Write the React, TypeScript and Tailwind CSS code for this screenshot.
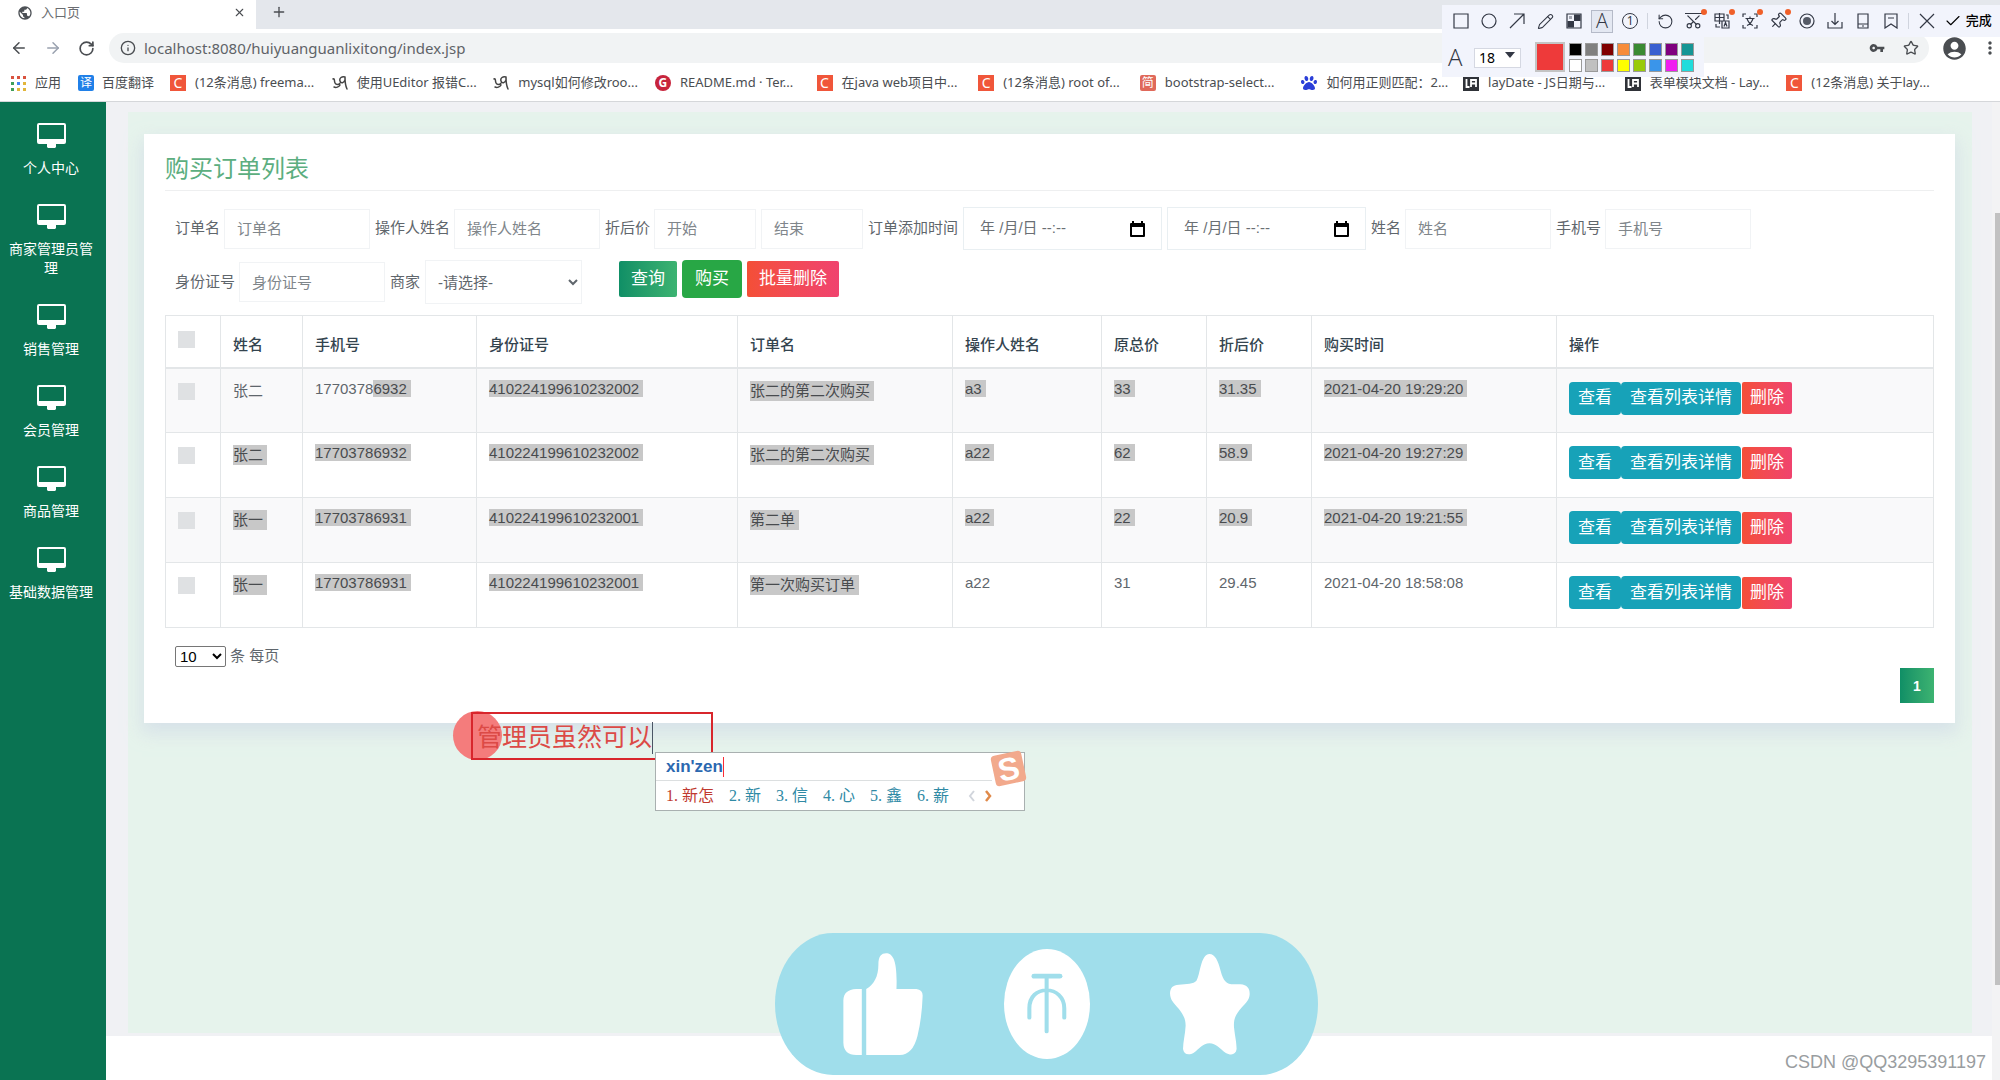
import { useState } from 'react';
import type { ReactNode } from 'react';
import { ArrowLeft, ArrowRight, Check, Info, Pencil, Pin, Plus, RotateCcw, RotateCw, Scissors, Star, X } from 'lucide-react';
import { MdAccountCircle, MdMoreVert, MdPublic, MdVpnKey } from 'react-icons/md';
import { FaPaw } from 'react-icons/fa';

type Bookmark = { icon: 'csdn' | 'script' | 'gitee' | 'jian' | 'baidu' | 'layui'; title: string };

const bookmarks: Bookmark[] = [
  { icon: 'csdn', title: '(12条消息) freema...' },
  { icon: 'script', title: '使用UEditor 报错C...' },
  { icon: 'script', title: 'mysql如何修改roo...' },
  { icon: 'gitee', title: 'README.md · Ter...' },
  { icon: 'csdn', title: '在java web项目中...' },
  { icon: 'csdn', title: '(12条消息) root of...' },
  { icon: 'jian', title: 'bootstrap-select...' },
  { icon: 'baidu', title: '如何用正则匹配：2...' },
  { icon: 'layui', title: 'layDate - JS日期与...' },
  { icon: 'layui', title: '表单模块文档 - Lay...' },
  { icon: 'csdn', title: '(12条消息) 关于lay...' },
];

const menu = ['个人中心', '商家管理员管理', '销售管理', '会员管理', '商品管理', '基础数据管理'];

type Order = {
  id: number;
  name: string;
  phone: string;
  idCard: string;
  order: string;
  operator: string;
  total: string;
  price: string;
  time: string;
};

const orders: Order[] = [
  { id: 1, name: '张二', phone: '17703786932', idCard: '410224199610232002', order: '张二的第二次购买', operator: 'a3', total: '33', price: '31.35', time: '2021-04-20 19:29:20' },
  { id: 2, name: '张二', phone: '17703786932', idCard: '410224199610232002', order: '张二的第二次购买', operator: 'a22', total: '62', price: '58.9', time: '2021-04-20 19:27:29' },
  { id: 3, name: '张一', phone: '17703786931', idCard: '410224199610232001', order: '第二单', operator: 'a22', total: '22', price: '20.9', time: '2021-04-20 19:21:55' },
  { id: 4, name: '张一', phone: '17703786931', idCard: '410224199610232001', order: '第一次购买订单', operator: 'a22', total: '31', price: '29.45', time: '2021-04-20 18:58:08' },
];

const headers = ['姓名', '手机号', '身份证号', '订单名', '操作人姓名', '原总价', '折后价', '购买时间', '操作'];

const swatches = [
  'bg-black', 'bg-[#808080]', 'bg-[#800000]', 'bg-[#f78c3a]', 'bg-[#3a8a32]', 'bg-[#3a5fd0]', 'bg-[#7f007f]', 'bg-[#159595]',
  'bg-white', 'bg-[#c0c0c0]', 'bg-[#ee3a3a]', 'bg-[#ffff00]', 'bg-[#9aca0a]', 'bg-[#3a95ea]', 'bg-[#f01df0]', 'bg-[#20dcdc]',
];

const BookmarkIcon = ({ icon }: { icon: Bookmark['icon'] }) => {
  if (icon === 'csdn') {
    return <span className="flex size-4 shrink-0 items-center justify-center bg-[#f0563a] text-sm text-white">C</span>;
  }
  if (icon === 'gitee') {
    return <span className="flex size-4 shrink-0 items-center justify-center rounded-full bg-[#c7243c] text-xs font-bold text-white">G</span>;
  }
  if (icon === 'jian') {
    return <span className="flex size-4 shrink-0 items-center justify-center rounded-xs bg-[#e0695a] text-xs text-white">简</span>;
  }
  if (icon === 'baidu') return <FaPaw className="size-4 shrink-0 text-[#2b3fd8]" />;
  if (icon === 'layui') {
    return (
      <svg viewBox="0 0 16 16" className="size-4 shrink-0">
        <rect width="16" height="16" fill="#2f3238" />
        <path d="M3.5 4v8h3M8 12V5h5v7M8 8.500h5" fill="none" stroke="#fff" strokeWidth="1.8" />
      </svg>
    );
  }
  return (
    <svg viewBox="0 0 16 16" className="size-4 shrink-0" fill="none" stroke="#444" strokeWidth="1.5" strokeLinecap="round">
      <path d="M1 4c2-1 1 2 2 4s4 2 5 0M13 2c-3-1-6 1-5 4s4 2 5-1V2c0 4 0 8 2 12M2 12c2 1 5 0 6-2" />
    </svg>
  );
};

const Browser = () => (
  <header className="bg-white text-[13px] text-[#4a4d51]">
    <div className="flex h-[29px] bg-[#e4e7ec]">
      <div className="flex w-64 items-center bg-white pb-1 pl-[17px] pr-2.5">
        <MdPublic size={16} className="text-[#4d5156]" />
        <span className="ml-2 flex-1 text-[#6a6d71]">入口页</span>
        <button aria-label="关闭标签页"><X size={13} /></button>
      </div>
      <div className="flex-1 rounded-bl-lg pl-[15px] pt-1">
        <button aria-label="新标签页"><Plus size={16} /></button>
      </div>
    </div>
    <div className="flex h-[38px] items-center pl-2.5">
      <button aria-label="后退"><ArrowLeft size={18} /></button>
      <button aria-label="前进" className="ml-4 text-gray-400"><ArrowRight size={18} /></button>
      <button aria-label="刷新" className="ml-4"><RotateCw size={17} strokeWidth={2.4} /></button>
      <div className="ml-3.5 flex h-[30px] flex-1 items-center rounded-full bg-[#f1f3f4] pl-[11px] pr-2.5">
        <Info size={16} />
        <input
          aria-label="地址"
          defaultValue="localhost:8080/huiyuanguanlixitong/index.jsp"
          className="ml-2 flex-1 bg-transparent text-[15px] text-[#5f6368] outline-none"
        />
        <MdVpnKey size={16} />
        <button aria-label="收藏" className="ml-[18px]"><Star size={16} /></button>
      </div>
      <MdAccountCircle size={27} className="ml-3" />
      <button aria-label="菜单" className="ml-3"><MdMoreVert size={20} /></button>
    </div>
    <nav className="flex h-[35px] items-center border-b border-[#d5d7da] pb-0.5 pl-2.5 pr-[52px]">
      <a href="#apps" className="flex w-[68px] items-center gap-[9px]">
        <svg viewBox="0 0 16 16" className="size-4">
          <path d="M1 1h3v3H1zM7 1h3v3H7zM13 1h3v3h-3z" fill="#d9533f" />
          <path d="M1 7h3v3H1zM1 13h3v3H1z" fill="#3f9f5a" />
          <path d="M7 7h3v3H7z" fill="#4285f4" />
          <path d="M13 7h3v3h-3zM7 13h3v3H7zM13 13h3v3h-3z" fill="#e2b53a" />
        </svg>
        应用
      </a>
      <a href="#fanyi" className="flex w-[92px] items-center gap-2">
        <span className="flex size-4 items-center justify-center rounded-xs bg-[#2080e8] text-xs text-white">译</span>
        百度翻译
      </a>
      <div className="grid flex-1 grid-cols-11">
        {bookmarks.map((b) => (
          <a key={b.title} href="#bookmark" className="flex items-center gap-[9px] whitespace-nowrap">
            <BookmarkIcon icon={b.icon} />
            {b.title}
          </a>
        ))}
      </div>
    </nav>
  </header>
);

const Tool = ({ label, dot, active, children }: { label: string; dot?: boolean; active?: boolean; children: ReactNode }) => (
  <button
    aria-label={label}
    className={`relative flex h-[23px] w-[22px] items-center justify-center ${active ? 'border border-[#b5bac8] bg-[#e4e8f2]' : ''}`}
  >
    {children}
    {dot && <span className="absolute -right-0.5 -top-px size-1.5 rounded-full bg-[#f0602a]" />}
  </button>
);

const Glyph = ({ d, children }: { d: string; children?: ReactNode }) => (
  <svg viewBox="0 0 16 16" className="size-4" fill="none" stroke="currentColor" strokeWidth="1.2">
    <path d={d} />
    {children}
  </svg>
);

// floating screenshot toolbar, sits above the browser bars
const CaptureToolbar = () => (
  <div className="absolute right-0 top-[5px] w-[558px] text-[#333845]">
    <div className="flex h-8 items-center justify-between bg-[#f2f4fc] px-2">
      <Tool label="矩形"><Glyph d="M1 1h14v14H1z" /></Tool>
      <Tool label="椭圆"><Glyph d="M8 1a7 7 0 1 1 0 14A7 7 0 0 1 8 1z" /></Tool>
      <Tool label="箭头"><Glyph d="M1 15L15 1M5 1h10v10" /></Tool>
      <Tool label="画笔"><Pencil size={17} strokeWidth={1.5} /></Tool>
      <Tool label="马赛克">
        <Glyph d="M1 1h14v14H1z">
          <path d="M8 1.500h6.500V8H8zM1.500 8H8v6.500H1.500z" fill="currentColor" stroke="none" />
          <path d="M3 3h3v3H3z" fill="currentColor" stroke="none" opacity=".4" />
        </Glyph>
      </Tool>
      <Tool label="文字" active><span className="font-['Open_Sans'] text-xl font-light">A</span></Tool>
      <Tool label="序号"><span className="flex size-4 items-center justify-center rounded-full border border-current text-xs">1</span></Tool>
      <span className="h-4 w-px bg-[#d0d4de]" />
      <Tool label="撤销"><RotateCcw size={17} strokeWidth={1.5} /></Tool>
      <Tool label="截图" dot>
        <span className="relative flex"><Scissors size={17} strokeWidth={1.6} className="-rotate-90" /><span className="absolute inset-x-0 top-0 h-px bg-current" /></span>
      </Tool>
      <Tool label="翻译" dot>
        <Glyph d="M1 1h9v7H1zM5.500 0v11M1 4.500h9M8 8h7v7H8zM10 13.500l1.500-4 1.500 4M2 11v3h4M12 2h2v4" />
      </Tool>
      <Tool label="识别文字" dot>
        <Glyph d="M1 4V1h3M12 1h3v3M15 12v3h-3M4 15H1v-3M3.500 5.500h9M8 3.500v2M5 12.500c3-1 5-4 6-7M5 5.500c1 3 3 6 6 7" />
      </Tool>
      <Tool label="钉住" dot><Pin size={18} strokeWidth={1.6} className="rotate-45" /></Tool>
      <Tool label="录制">
        <Glyph d="M8 1a7 7 0 1 1 0 14A7 7 0 0 1 8 1z"><circle cx="8" cy="8" r="4" fill="#555a66" stroke="none" /></Glyph>
      </Tool>
      <Tool label="保存"><Glyph d="M1 9v6h14V9M8 0v11M4.500 8L8 11.500 11.500 8" /></Tool>
      <Tool label="手机"><Glyph d="M3 1h10v14H3zM3 11h10M7 13h2" /></Tool>
      <Tool label="收藏"><Glyph d="M2 1h12v14l-6-4-6 4zM5 5h6" /></Tool>
      <span className="h-4 w-px bg-[#d0d4de]" />
      <Tool label="取消"><Glyph d="M1 1l14 14M15 1L1 15" /></Tool>
      <button className="flex items-center gap-1 text-[13px] font-medium text-black"><Check size={18} strokeWidth={1.5} />完成</button>
    </div>
    <div className="flex h-10 w-[262px] items-center bg-[#f2f4fc] pl-1.5">
      <span className="w-[26px] font-['Open_Sans'] text-2xl font-light">A</span>
      <div className="relative">
        <select aria-label="字号" className="h-5 w-[47px] appearance-none border border-[#d5d8e2] bg-white pl-1 text-sm/none text-black">
          <option>18</option>
        </select>
        <svg viewBox="0 0 10 6" className="pointer-events-none absolute right-1.5 top-[7px] h-1.5 w-2.5"><path d="M0 0h10L5 6z" fill="currentColor" /></svg>
      </div>
      <span className="ml-3.5 size-[30px] border-2 border-[#c4c4c4] bg-[#ee3a3a]" />
      <div className="ml-1 grid grid-cols-8 gap-[3px]">
        {swatches.map((color) => (
          <button key={color} aria-label="颜色" className={`size-[13px] border border-[#9a9a9a] ${color}`} />
        ))}
      </div>
    </div>
  </div>
);

const Sidebar = () => (
  <aside className="w-[106px] shrink-0 bg-[#0a7352] pr-1 pt-[21px] text-center text-sm/[19px] text-white">
    {menu.map((item) => (
      <a key={item} href="#menu" className="mb-[26px] flex flex-col items-center gap-[11px] px-2">
        <svg viewBox="0 0 29 25" className="h-[25px] w-[29px]" fill="currentColor">
          <path fillRule="evenodd" d="M2 0h25a2 2 0 0 1 2 2v17a2 2 0 0 1-2 2h-8v3l-1 1h-7l-1-1v-3H2a2 2 0 0 1-2-2V2a2 2 0 0 1 2-2zM2 2v14h25V2z" />
        </svg>
        {item}
      </a>
    ))}
  </aside>
);

const Field = ({ id, label, hint = label, narrow }: { id: string; label?: string; hint?: string; narrow?: boolean }) => (
  <div className="flex items-center gap-1">
    {label && <label htmlFor={id}>{label}</label>}
    <input
      id={id}
      aria-label={hint}
      placeholder={hint}
      className={`h-10 border border-[#f1f3f5] px-3 placeholder:text-[#80868b] ${narrow ? 'w-[102px]' : 'w-[146px]'}`}
    />
  </div>
);

const DateField = ({ id }: { id: string }) => (
  <div className="flex h-[43px] w-[199px] items-center border border-[#e9eff2] px-4">
    <input id={id} aria-label="订单添加时间" placeholder="年 /月/日 --:--" className="w-full min-w-0 placeholder:text-[#6a6f74]" />
    <svg viewBox="0 0 15 16" className="h-4 w-[15px] shrink-0 text-black">
      <path fillRule="evenodd" d="M2 0h2v2h7V0h2v2h1a1 1 0 0 1 1 1v12a1 1 0 0 1-1 1H1a1 1 0 0 1-1-1V3a1 1 0 0 1 1-1h1zM2 6v8h11V6z" fill="currentColor" />
    </svg>
  </div>
);

const Filters = () => (
  <form className="flex flex-col gap-2.5 pl-2.5 pt-4" onSubmit={(e) => e.preventDefault()}>
    <div className="flex items-center gap-[5px] whitespace-nowrap">
      <Field id="order" label="订单名" />
      <Field id="operator" label="操作人姓名" />
      <Field id="from" label="折后价" hint="开始" narrow />
      <Field id="to" hint="结束" narrow />
      <label htmlFor="dateFrom">订单添加时间</label>
      <DateField id="dateFrom" />
      <DateField id="dateTo" />
      <Field id="name" label="姓名" />
      <Field id="phone" label="手机号" />
    </div>
    <div className="flex items-center gap-[5px] whitespace-nowrap">
      <Field id="idCard" label="身份证号" />
      <label htmlFor="shop">商家</label>
      <select id="shop" className="h-11 w-[157px] border border-[#f1f3f5] px-2">
        <option>-请选择-</option>
      </select>
      <div className="ml-8 flex items-center gap-[5px] self-start text-[17px] text-white">
        <button className="h-9 rounded-xs bg-linear-to-r from-[#0f8f66] to-[#3cb371] px-3">查询</button>
        <button className="h-[38px] rounded-sm bg-[#28a745] px-[13px]">购买</button>
        <button className="h-9 rounded-xs bg-linear-to-r from-[#f44f36] to-[#f0436e] px-3">批量删除</button>
      </div>
    </div>
  </form>
);

const OrderTable = () => {
  const cell = 'border border-[#e3e6e8] px-3 pt-2.5 align-top leading-5';
  const mark = 'bg-[#c8c8c8] pr-1 text-[#484b4e]';
  const box = 'block size-[17px] appearance-none bg-[#dfe1e3]';

  return (
    <table className="mt-[11px] w-full table-fixed border-collapse text-left">
      <colgroup>
        <col className="w-[55px]" />
        <col className="w-[82px]" />
        <col className="w-[174px]" />
        <col className="w-[261px]" />
        <col className="w-[215px]" />
        <col className="w-[149px]" />
        <col className="w-[105px]" />
        <col className="w-[105px]" />
        <col className="w-[245px]" />
        <col />
      </colgroup>
      <thead>
        <tr className="h-[52px] border-b-2 border-[#e3e6e8]">
          <th className="border border-[#e3e6e8] px-3 pb-1"><input type="checkbox" aria-label="全选" className={box} /></th>
          {headers.map((h) => (
            <th key={h} className="border border-[#e3e6e8] px-3 pt-2 font-medium text-[#34444f]">{h}</th>
          ))}
        </tr>
      </thead>
      <tbody>
        {orders.map((o, i) => {
          // the text selection runs from the first phone number to the last order name
          const last = i === orders.length - 1;
          const tail = last ? '' : mark;
          return (
            <tr key={o.id} className="h-[65px] odd:bg-[#f9f9fa]">
              <td className={cell}><input type="checkbox" aria-label={`选择 ${o.order}`} className={`mt-1 ${box}`} /></td>
              <td className={cell}><span className={`mt-0.5 inline-block ${i > 0 ? mark : ''}`}>{o.name}</span></td>
              <td className={cell}>
                {i === 0 ? <>{o.phone.slice(0, 7)}<span className={mark}>{o.phone.slice(7)}</span></> : <span className={mark}>{o.phone}</span>}
              </td>
              <td className={cell}><span className={mark}>{o.idCard}</span></td>
              <td className={cell}><span className={`mt-0.5 inline-block ${mark}`}>{o.order}</span></td>
              <td className={cell}><span className={tail}>{o.operator}</span></td>
              <td className={cell}><span className={tail}>{o.total}</span></td>
              <td className={cell}><span className={tail}>{o.price}</span></td>
              <td className={cell}><span className={tail}>{o.time}</span></td>
              <td className={cell}>
                <div className="mt-[3px] flex items-center whitespace-nowrap text-[17px] text-white">
                  <button className="h-[33px] rounded-sm bg-[#17a2b8] px-[9px]">查看</button>
                  <button className="h-[33px] rounded-sm bg-[#17a2b8] px-[9px]">查看列表详情</button>
                  <button className="ml-px h-8 rounded-xs bg-linear-to-r from-[#f44f36] to-[#f0436e] px-2">删除</button>
                </div>
              </td>
            </tr>
          );
        })}
      </tbody>
    </table>
  );
};

// red note being typed on the screenshot, with the input method popup under it
const Annotation = () => (
  <div className="absolute left-[347px] top-[609px]">
    <div className="absolute left-0 top-0 size-[49px] rounded-full bg-[#f47c7c]" />
    <div className="absolute left-[18px] top-px flex h-12 w-[242px] items-center border-2 border-[#d8262c] pl-1 pt-1 text-[25px] whitespace-nowrap text-[#dc4a46]">
      管理员虽然可以
      <span className="h-8 w-px bg-gray-600" />
    </div>
    <div className="absolute left-[202px] top-[41px] h-[59px] w-[370px] border border-[#a9b0b0] bg-white">
      <div className="mr-8 flex h-7 items-center border-b border-[#dcdfe0] pl-2.5 text-[17px] font-bold text-[#2b68b0]">
        xin'zen
        <span className="h-5 w-px bg-red-500" />
      </div>
      <div className="flex h-[29px] items-center gap-[15px] pl-2.5 font-['Liberation_Serif','Noto_Sans_CJK_SC',serif] text-base whitespace-nowrap text-[#2f8aa5]">
        <span className="flex gap-1 text-[#c0392f]"><span>1.</span>新怎</span>
        <span className="flex gap-1"><span>2.</span>新</span>
        <span className="flex gap-1"><span>3.</span>信</span>
        <span className="flex gap-1"><span>4.</span>心</span>
        <span className="flex gap-1"><span>5.</span>鑫</span>
        <span className="flex gap-1"><span>6.</span>薪</span>
        <span className="ml-1 flex gap-2">
          <button aria-label="上一页" className="text-gray-300">
            <svg viewBox="0 0 8 12" className="h-3 w-2" fill="none" stroke="currentColor" strokeWidth="2"><path d="M6 1L2 6l4 5" /></svg>
          </button>
          <button aria-label="下一页" className="text-[#e08a4a]">
            <svg viewBox="0 0 8 12" className="h-3 w-2" fill="none" stroke="currentColor" strokeWidth="2.500"><path d="M2 1l4 5-4 5" /></svg>
          </button>
        </span>
      </div>
      <div className="absolute right-0 top-0 flex size-[31px] -rotate-12 items-center justify-center rounded-sm bg-[#f2a98c] text-[32px] font-bold text-white">S</div>
    </div>
  </div>
);

const LikeBar = () => (
  <div className="absolute bottom-[5px] left-[669px] flex h-[142px] w-[543px] items-center justify-between rounded-[58px/71px] bg-[#a0deeb] px-[68px]">
    <svg viewBox="226 95 217 307" preserveAspectRatio="none" className="h-[102px] w-20" fill="#fff">
      <path d="M277 203H262Q226 205 227 240V365Q228 402 262 402H277z" />
      <path d="M289 402V203C310 190 322 165 322 130C322 105 330 96 343 96C362 96 374 120 371 203H425Q443 205 442 225Q440 290 428 345Q415 402 380 402z" />
    </svg>
    <svg viewBox="659 85 234 328" preserveAspectRatio="none" className="h-[110px] w-[86px]">
      <ellipse cx="776" cy="249" rx="117" ry="164" fill="#fff" />
      <g fill="none" stroke="#a0deeb" strokeWidth="11" strokeLinecap="round">
        <path d="M775 170V331M728 290V262C728 225 750 208 775 208S823 228 823 262V290" />
        <path d="M741 166H811" strokeWidth="14" />
      </g>
    </svg>
    <svg viewBox="1111 100 215 303" preserveAspectRatio="none" className="h-[101px] w-20" fill="#fff">
      <path d="M1217 100C1232 100 1240 120 1247 150C1254 180 1262 191 1283 191H1300C1320 193 1326 205 1325 222C1324 240 1312 248 1298 268C1284 288 1282 300 1283 320C1286 350 1290 365 1290 385C1288 402 1275 406 1260 396C1245 385 1235 368 1217 368S1190 385 1175 396C1160 406 1148 400 1146 385C1146 365 1152 340 1153 315C1153 295 1148 285 1135 265C1120 245 1112 240 1111 218C1112 200 1118 194 1135 192C1155 189 1175 190 1182 180C1192 165 1193 100 1217 100z" />
    </svg>
  </div>
);

export default function App() {
  const [pageSize, setPageSize] = useState('10');

  return (
    <div className="relative flex min-h-screen flex-col font-['Liberation_Sans','Noto_Sans_CJK_SC',sans-serif]">
      <div className="font-['Noto_Sans','Noto_Sans_CJK_SC',sans-serif]">
        <Browser />
        <CaptureToolbar />
      </div>

      <div className="flex flex-1">
        <Sidebar />
        <div className="relative flex min-w-0 flex-1 flex-col">
          <main className="flex flex-1 flex-col bg-[#f0f1f4] pb-[3px] pl-[22px] pr-5 pt-2.5 text-[15px] text-[#5f666c]">
            <div className="flex-1 bg-[#e6f3ec] pl-4 pr-[17px] pt-[22px]">
              <section className="bg-white px-[21px] pb-5 pt-5 shadow-[0_8px_16px_2px_rgba(205,215,230,0.6)]">
                <h1 className="border-b border-[#eeeff0] pb-1.5 text-2xl/[30px] text-[#5cae80]">购买订单列表</h1>
                <Filters />
                <OrderTable />
                <div className="mt-[18px] flex h-[21px] items-center gap-1 pl-2.5">
                  <select
                    id="pageSize"
                    value={pageSize}
                    onChange={(e) => setPageSize(e.target.value)}
                    className="h-[21px] w-[51px] rounded-xs border border-[#767676] text-[15px]/none text-black"
                  >
                    <option>10</option>
                    <option>25</option>
                    <option>50</option>
                  </select>
                  <label htmlFor="pageSize">条 每页</label>
                </div>
                <div className="flex justify-end pt-px">
                  <button className="h-[35px] w-[34px] bg-linear-to-r from-[#0f8f66] to-[#3cb371] text-sm font-bold text-white">1</button>
                </div>
              </section>
            </div>
          </main>
          <footer className="flex h-11 items-center justify-end bg-white pr-1.5 pt-2 text-lg text-[#999da0]">
            CSDN @QQ3295391197
          </footer>
          <Annotation />
          <LikeBar />
        </div>
        {/* scrollbar */}
        <div className="flex w-2 flex-col items-end bg-[#f3f3f4] pb-[95px] pt-[111px]">
          <div className="w-[5px] flex-1 bg-[#c1c1c1]" />
        </div>
      </div>
    </div>
  );
}
